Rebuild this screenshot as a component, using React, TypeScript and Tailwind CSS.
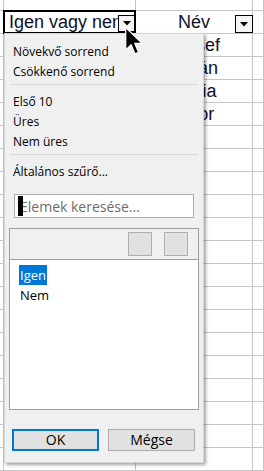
import type { ReactNode } from 'react';

const rows = ['Igen vagy nem', 'József', 'István', 'Mária', 'Tibor'];
const rowCount = 20;

const menuFont = { fontFamily: '"Open Sans", "Noto Sans", sans-serif' };

export default function App() {
  return (
    <div className="relative h-[471px] w-[264px] overflow-hidden bg-white" style={{ fontFamily: '"Liberation Sans", Arial, sans-serif' }}>
      <Sheet />
      <FilterPopup />
      <Pointer />
    </div>
  );
}

function Sheet() {
  return (
    <div className="grid grid-cols-[4px_132px_117px_1fr]">
      {/* partial row above the header */}
      <Cell />
      <Cell className="h-[11px]" />
      <Cell />
      <Cell />
      {Array.from({ length: rowCount }).map((_, i) => (
        <Row key={i} index={i} />
      ))}
    </div>
  );
}

function Row({ index }: { index: number }) {
  const b = index < rows.length ? (index === 0 ? 'Név' : rows[index]) : '';
  const a = index === 0 ? rows[0] : '';
  return (
    <>
      <Cell className="h-[23px]" />
      <Cell className="relative h-[23px]">
        {index === 0 && (
          <>
            <div className="absolute -left-px -top-px h-[24px] w-[133px] border-2 border-black" />
            <div className="overflow-hidden whitespace-nowrap pl-[5px] pr-[18px] text-[18px] leading-[22px] text-[#10102a]">{a}</div>
            <DropButton className="right-0 top-[4px]" />
          </>
        )}
      </Cell>
      <Cell className="relative h-[23px]">
        <div className="whitespace-nowrap text-center text-[18px] leading-[22px] text-[#10102a]">{b}</div>
        {index === 0 && <DropButton className="-right-px top-[4px] h-[18px] w-[18px]" />}
      </Cell>
      <Cell className="h-[23px]" />
    </>
  );
}

function Cell({ className = '', children }: { className?: string; children?: ReactNode }) {
  return <div className={`border-b border-r border-[#c6c6c6] ${className}`}>{children}</div>;
}

function DropButton({ className = '' }: { className?: string }) {
  return (
    <div className={`absolute flex h-[17px] w-[17px] items-center justify-center border border-black bg-[#f4f4f4] ${className}`}>
      <svg width="8" height="5" viewBox="0 0 8 5">
        <path d="M0 0h8L4 4.5z" fill="#000" />
      </svg>
    </div>
  );
}

function FilterPopup() {
  return (
    <div
      className="absolute left-[4px] top-[33px] flex h-[430px] w-[200px] flex-col border border-[#d4d4d4] bg-[#f0f0f0] pt-[8px] text-[12px] text-black shadow-[2px_2px_3px_rgba(0,0,0,0.35)]"
      style={menuFont}
    >
      <MenuItem>Növekvő sorrend</MenuItem>
      <MenuItem>Csökkenő sorrend</MenuItem>
      <Separator />
      <MenuItem>Első 10</MenuItem>
      <MenuItem>Üres</MenuItem>
      <MenuItem>Nem üres</MenuItem>
      <Separator />
      <MenuItem>Általános szűrő...</MenuItem>

      <div className="relative mx-[9px] mt-[12px] flex h-[24px] items-center border border-[#ababab] bg-white pl-[5px] text-[14px] text-[#6d6d6d]">
        <span className="absolute left-[3px] top-[1px] h-[20px] w-[5px] bg-black" />
        Elemek keresése...
      </div>

      <div className="mx-[4px] mt-[10px] flex h-[182px] flex-col border border-[#a0a0a0] bg-white">
        <div className="flex h-[31px] items-center justify-end gap-[12px] border-b border-[#a0a0a0] bg-[#f0f0f0] pr-[10px]">
          <div className="h-[24px] w-[24px] border border-[#adadad] bg-[#e1e1e1]" />
          <div className="h-[24px] w-[24px] border border-[#adadad] bg-[#e1e1e1]" />
        </div>
        <div className="flex flex-col items-start pl-[9px] pt-[5px] text-[13px] leading-[20px]">
          <span className="bg-[#0078d7] px-px text-white">Igen</span>
          <span className="px-px">Nem</span>
        </div>
      </div>

      <div className="mt-[19px] flex gap-[9px] px-[7px] text-[14px]">
        <button className="h-[22px] w-[87px] border-2 border-[#0078d7] bg-[#e1e1e1] leading-none">OK</button>
        <button className="h-[22px] w-[87px] border border-[#adadad] bg-[#e1e1e1] leading-none">Mégse</button>
      </div>
    </div>
  );
}

function MenuItem({ children }: { children: ReactNode }) {
  return <div className="h-[20px] pl-[8px] leading-[20px]">{children}</div>;
}

function Separator() {
  return <div className="mx-[5px] mb-[7px] mt-[2px] h-px bg-[#d7d7d7]" />;
}

function Pointer() {
  return (
    <svg className="absolute left-[124px] top-[26px]" width="20" height="30" viewBox="0 0 13 20">
      <path d="M1 1v15l3.6-3.5L7.2 18.6l2.4-1-2.6-6h4.9z" fill="#000" stroke="#fff" strokeWidth="0.8" strokeLinejoin="round" />
    </svg>
  );
}
